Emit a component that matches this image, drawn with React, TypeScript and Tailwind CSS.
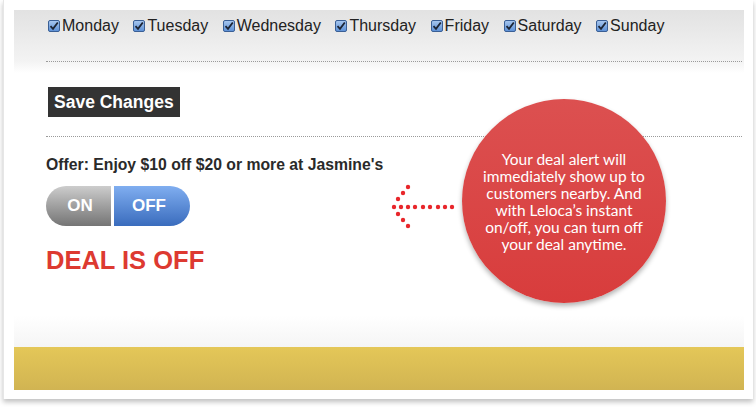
const days = ["Monday", "Tuesday", "Wednesday", "Thursday", "Friday", "Saturday", "Sunday"];

function CheckBox() {
  return (
    <svg width="12" height="12" viewBox="0 0 12 12" className="shrink-0">
      <defs>
        <linearGradient id="cb" x1="0" y1="0" x2="0" y2="1">
          <stop offset="0" stopColor="#a9c8ef" />
          <stop offset="1" stopColor="#5b8fd6" />
        </linearGradient>
      </defs>
      <rect x="0.5" y="0.5" width="11" height="11" rx="1.5" fill="url(#cb)" stroke="#3a5f95" />
      <path d="M2.5 6.2 L5 8.8 L9.8 2.5" fill="none" stroke="#1c2433" strokeWidth="1.8" />
    </svg>
  );
}

function DottedArrow() {
  const row = [394, 401, 408, 415, 423, 430, 438, 445, 452];
  const head = [
    [408, 187],
    [403, 193],
    [398, 199],
    [398, 214],
    [403, 220],
    [408, 226],
  ];
  return (
    <svg width="70" height="50" viewBox="388 182 70 50" className="absolute left-[388px] top-[182px]">
      {row.map((x) => (
        <circle key={x} cx={x} cy={207} r="2.2" fill="#e8262b" />
      ))}
      {head.map(([x, y]) => (
        <circle key={`${x}-${y}`} cx={x} cy={y} r="2.2" fill="#e8262b" />
      ))}
    </svg>
  );
}

export default function App() {
  return (
    <div className="relative w-[756px] h-[407px] bg-white overflow-hidden font-['Liberation_Sans',Arial,sans-serif]">
      <div className="ml-[3px] w-[750px] h-[399px] bg-white border-l border-[#e6e6e6] shadow-[0_3px_5px_rgba(0,0,0,0.25)] pt-[10px] pl-[10px]">
        <div className="w-[730px] flex flex-col">
          {/* days */}
          <div className="h-[51px] bg-gradient-to-b from-[#e2e2e2] to-[#f3f3f3]">
            <div className="flex items-center gap-[14.5px] pl-[34px] pt-[6px] text-[16px] text-[#222]">
              {days.map((d) => (
                <label key={d} className="flex items-center gap-[2px] leading-[20px]">
                  <CheckBox />
                  {d}
                </label>
              ))}
            </div>
          </div>
          <div className="h-[12px] bg-gradient-to-b from-[#f3f3f3] to-white">
            <div className="ml-[32px] mr-[2px] border-t border-dotted border-[#9a9a9a]" />
          </div>

          <div className="pl-[34px] pt-[14px] h-[63px]">
            <button className="bg-[#333] text-white font-bold text-[17.5px] leading-[30px] px-[6px]">
              Save Changes
            </button>
          </div>
          <div className="ml-[32px] mr-[2px] border-t border-dotted border-[#9a9a9a]" />

          <div className="pl-[32px] pt-[19px] h-[210px] bg-gradient-to-b from-white from-[85%] to-[#f5f5f5]">
            <p className="font-bold text-[15.75px] leading-[18px] text-[#2a2a2a]">
              Offer: Enjoy $10 off $20 or more at Jasmine's
            </p>
            <div className="mt-[12px] flex h-[40px] w-[144px]">
              <div className="w-[65px] rounded-l-[20px] bg-gradient-to-b from-[#cdcdcd] to-[#757575] flex items-center justify-center text-white font-bold text-[17px] pl-[3px]">
                ON
              </div>
              <div className="ml-[3px] w-[76px] rounded-r-[20px] bg-gradient-to-b from-[#80aef0] to-[#3a6cbd] flex items-center justify-center text-white font-bold text-[17px] pr-[6px]">
                OFF
              </div>
            </div>
            <p className="mt-[19px] font-bold text-[25.5px] leading-[30px] text-[#dd3a31]">DEAL IS OFF</p>
          </div>

          <div className="h-[43px] bg-gradient-to-b from-[#e4c758] to-[#d1b452]" />
        </div>
      </div>

      <DottedArrow />

      <div className="absolute left-[462px] top-[99px] w-[204px] h-[204px] rounded-full bg-gradient-to-b from-[#dc5050] to-[#d83c3c] shadow-[0_3px_5px_rgba(0,0,0,0.3)] flex items-center justify-center">
        <p className="w-[180px] text-center text-white text-[15.5px] leading-[17px] font-['Lato','Open_Sans',sans-serif] mt-[1px]">
          Your deal alert will immediately show up to customers nearby. And with Leloca’s instant on/off, you can turn off your deal anytime.
        </p>
      </div>
    </div>
  );
}
